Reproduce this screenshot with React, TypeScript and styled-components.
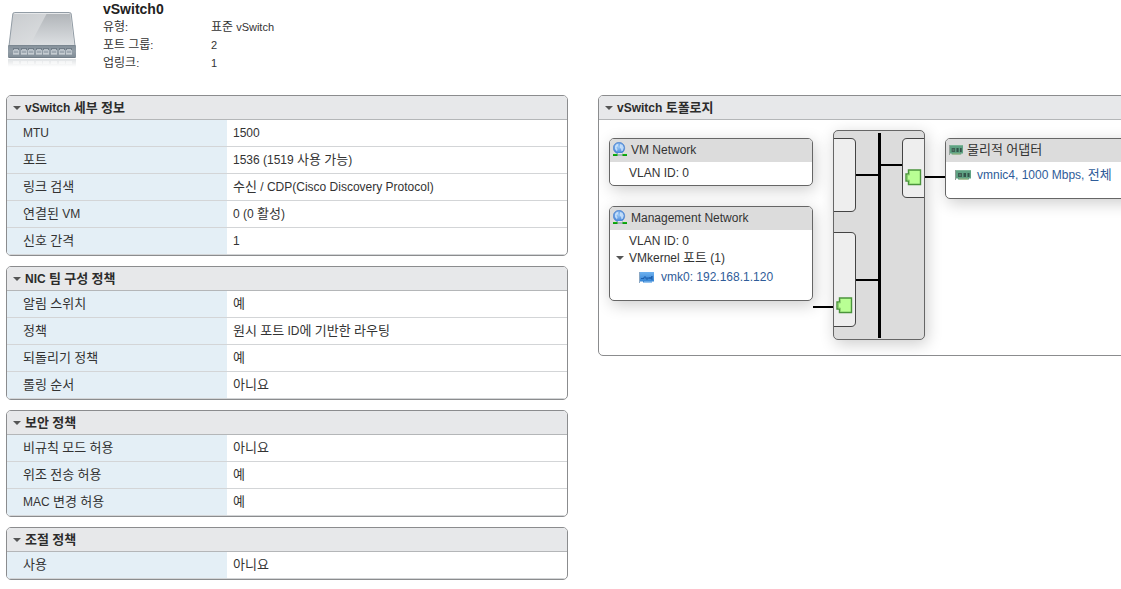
import React, { useState } from "react";
import styled, { createGlobalStyle } from "styled-components";

const GlobalStyle = createGlobalStyle`
  *, *::before, *::after { box-sizing: border-box; }
  body {
    margin: 0;
    background: #fff;
    color: #333;
    font-family: "Liberation Sans", Arial, "Noto Sans CJK KR", sans-serif;
    font-size: 12px;
    line-height: 18px;
  }
`;

const Page = styled.main`
  padding: 0 0 8px 6px;
  overflow: hidden;
`;

const Summary = styled.header`
  display: flex;
  gap: 25px;
  min-height: 95px;
`;

const DeviceIcon = styled.svg`
  flex: none;
  width: 72px;
  height: 60px;
  margin-top: 10px;
`;

const SwitchName = styled.h1`
  margin: 0;
  font-size: 14px;
  line-height: 18px;
  color: #222;
`;

const Facts = styled.dl`
  display: grid;
  grid-template-columns: 108px auto;
  margin: 0;
  font-size: 11px;
  line-height: 18px;
`;

const Term = styled.dt``;
const Fact = styled.dd`
  margin: 0;
`;

const Hangul = styled.span`
  font-size: calc(1em + 1px);
  line-height: 1;
`;

const Columns = styled.div`
  display: grid;
  grid-template-columns: 1fr 1fr;
  align-items: start;
  gap: 30px;
  margin-right: -39px;
`;

const PanelStack = styled.div`
  display: flex;
  flex-direction: column;
  gap: 10px;
`;

const PanelFrame = styled.section`
  border: 1px solid #8b8c8e;
  border-radius: 5px;
  overflow: hidden;
  background: #fff;
`;

const PanelHeading = styled.h2`
  margin: 0;
  font-size: 12px;
`;

const PanelToggle = styled.button`
  display: flex;
  align-items: center;
  gap: 4px;
  width: 100%;
  height: 24px;
  padding: 0 6px;
  border: 0;
  border-bottom: 1px solid #b4b6b8;
  background: #e7e8ea;
  color: #2c2c2c;
  font: inherit;
  font-weight: bold;
  text-align: left;
`;

const DetailTable = styled.table`
  width: 100%;
  border-collapse: separate;
  border-spacing: 0;
  table-layout: fixed;
`;

const Label = styled.th`
  width: 220px;
  height: 27px;
  padding: 0 6px 0 16px;
  border-bottom: 1px solid #d3d5d7;
  background: #e4eff6;
  font-weight: normal;
  text-align: left;
`;

const Value = styled.td`
  height: 27px;
  padding: 0 6px;
  border-bottom: 1px solid #d3d5d7;
`;

const Canvas = styled.div`
  position: relative;
  min-height: 235px;
`;

const Node = styled.article<{ $x: number; $y: number; $h: number }>`
  position: absolute;
  left: ${(p) => p.$x}px;
  top: ${(p) => p.$y}px;
  width: 204px;
  min-height: ${(p) => p.$h}px;
  border: 1px solid #666;
  border-radius: 5px;
  background: #fff;
  box-shadow: 2px 4px 16px rgba(0, 0, 0, 0.2);
`;

const NodeTitle = styled.h3`
  display: flex;
  align-items: center;
  gap: 4px;
  height: 23px;
  margin: 0;
  padding: 0 0 2px 3px;
  border-radius: 4px 4px 0 0;
  background: #dcdcdc;
  font-size: 12px;
  font-weight: normal;
`;

const NodeText = styled.p`
  margin: 0;
  padding: 2px 0 0 19px;
`;

const GroupToggle = styled.button`
  display: flex;
  align-items: center;
  gap: 5px;
  height: 16px;
  padding: 0 0 0 6px;
  border: 0;
  background: none;
  color: inherit;
  font: inherit;
`;

const DeviceRow = styled.a<{ $indent: number }>`
  display: flex;
  align-items: center;
  gap: 6px;
  height: 22px;
  padding-left: ${(p) => p.$indent}px;
  color: #2f5c99;
  text-decoration: none;
  white-space: nowrap;
`;

const DeviceRows = styled.div`
  padding-top: 2px;
`;

const SwitchBody = styled.div`
  position: absolute;
  left: 234px;
  top: 10px;
  width: 92px;
  height: 210px;
  border: 1px solid #666;
  border-radius: 5px;
  background: #dcdcdc;
  box-shadow: 2px 4px 16px rgba(0, 0, 0, 0.2);
`;

const Wiring = styled.svg`
  position: absolute;
  left: 214px;
  top: 10px;
`;

const Glyph = styled.svg`
  flex: none;
`;

/* Hangul is set one pixel larger than the Latin text beside it. */
function Mixed({ text }: { text: string }) {
  return (
    <span>
      {text.split(/([가-힣]+)/).map((run, i) =>
        i % 2 ? <Hangul key={i}>{run}</Hangul> : run
      )}
    </span>
  );
}

function Caret() {
  return (
    <Glyph width="8" height="4" viewBox="0 0 8 4" aria-hidden="true">
      <path d="M0 0H8L4 4Z" fill="#555" />
    </Glyph>
  );
}

function SwitchDevice() {
  const ports = [13, 21, 28, 36, 43, 51, 59, 66];
  return (
    <DeviceIcon viewBox="6 10 72 60" aria-hidden="true">
      <defs>
        <linearGradient id="lid" x1="0" y1="0" x2="1" y2="1">
          <stop offset="0" stopColor="#c8cbce" />
          <stop offset="1" stopColor="#e4e6e8" />
        </linearGradient>
        <linearGradient id="shade" x1="0" y1="0" x2="0" y2="1">
          <stop offset="0" stopColor="#b0b4b8" />
          <stop offset="1" stopColor="#dcdfe2" />
        </linearGradient>
        <linearGradient id="front" x1="0" y1="0" x2="0" y2="1">
          <stop offset="0" stopColor="#84909a" />
          <stop offset="0.5" stopColor="#929da6" />
          <stop offset="1" stopColor="#7f8b95" />
        </linearGradient>
        <linearGradient id="mirror" x1="0" y1="0" x2="0" y2="1">
          <stop offset="0" stopColor="#dfe2e4" />
          <stop offset="1" stopColor="#fff" />
        </linearGradient>
      </defs>
      <path d="M14.5 12.500H69.5Q71 12.500 71.2 14L75 46H9L12.8 14Q13 12.500 14.5 12.500Z" fill="url(#lid)" stroke="#929ca5" />
      <path d="M47 13H70L74 45H30Z" fill="url(#shade)" />
      <path d="M14.500 13.500H69.500" stroke="#e6e8ea" />
      <rect x="8" y="45" width="68" height="13" rx="1" fill="url(#front)" />
      <path d="M9 45.500H75" stroke="#7b8791" />
      <path d="M9 57.500H75" stroke="#737f89" />
      <rect x="8" y="59" width="68" height="8" fill="url(#mirror)" />
      {ports.map((x) => (
        <g key={x} transform={`translate(${x} 48)`}>
          <path d="M0 0H6V6H0Z" fill="#717d88" />
          <path d="M0 2H1V1H5V2H6V6H0Z" fill="#b9c1c8" />
          <path d="M1 3H5V5H1Z" fill="#a0aab3" />
          <path d="M0 6H6" stroke="#d3d9dd" />
          <path d="M0 13H6V16H0Z" fill="#fff" opacity="0.5" />
        </g>
      ))}
    </DeviceIcon>
  );
}

function NetworkIcon() {
  return (
    <Glyph width="14" height="15" viewBox="0 0 14 15" aria-hidden="true">
      <defs>
        <radialGradient id="globe" cx="0.45" cy="0.4" r="0.6">
          <stop offset="0" stopColor="#9ccaf6" />
          <stop offset="1" stopColor="#3f7fd6" />
        </radialGradient>
      </defs>
      <circle cx="6" cy="6" r="5.700" fill="url(#globe)" stroke="#4a7fcb" strokeWidth="0.600" />
      <path d="M2 4Q3.500 1.500 5.500 1.800L5 4L3.500 5.500L4.500 7.500L4 9.500L2 7Z" fill="#d5e9fc" opacity="0.8" />
      <path d="M7 2L9.500 2.800L10.800 5.500L10 8.500L8.500 9.500L8 7L6.800 5.500Z" fill="#d5e9fc" opacity="0.8" />
      <path d="M0 12H14V14H0Z" fill="#12b312" />
      <path d="M0 13.500H14" stroke="#0c9a0c" />
      <path d="M4.500 11H9.500V14H4.500Z" fill="#a9b8bd" />
      <path d="M5 11.500H9" stroke="#e2e8ea" />
    </Glyph>
  );
}

function VmkIcon() {
  return (
    <Glyph width="16" height="11" viewBox="0 0 16 11" aria-hidden="true">
      <defs>
        <linearGradient id="vmk" x1="0" y1="0" x2="0" y2="1">
          <stop offset="0" stopColor="#6fb2f0" />
          <stop offset="1" stopColor="#2f7fd0" />
        </linearGradient>
      </defs>
      <path d="M1 0H15V9.500H13V10.500H4V9.500H1Z" fill="url(#vmk)" />
      <path d="M0.500 0V11" stroke="#8aa7c4" />
      <path d="M2 6.500H5V5H7V7H9V5M10 7L11 5L12 7L13 4V8" fill="none" stroke="#1d5fae" />
      <path d="M5 10H13" stroke="#9ccbf5" />
    </Glyph>
  );
}

function NicIcon({ width }: { width: number }) {
  return (
    <Glyph width={width} height="10" viewBox="0 0 16 10" preserveAspectRatio="none" aria-hidden="true">
      <path d="M1 0H16V8.500H14V9.500H3V8.500H1Z" fill="#5fa283" />
      <path d="M0.500 0V10" stroke="#8d9c94" />
      <path d="M1 0.500H16" stroke="#7cb598" />
      <path d="M3 3H7V7H3Z" fill="#3d5f52" />
      <path d="M8.500 3H11V7H8.500ZM12.500 3H14.500V7H12.500Z" fill="#33544a" />
      <path d="M4 5H6" stroke="#6f8d82" />
      <path d="M4 9H13" stroke="#a3b77f" />
    </Glyph>
  );
}

function Jack({ x, y }: { x: number; y: number }) {
  return (
    <g transform={`translate(${x} ${y})`}>
      <path d="M3.500 1H15.500V15.500H3.500V12H1V5H3.500Z" fill="#b9ff94" stroke="#4b943c" strokeWidth="1.400" />
      <path d="M4.500 14V11H2.500V6H4.500V2.500" fill="none" stroke="#8fd172" />
    </g>
  );
}

function Panel({ title, children }: { title: string; children: React.ReactNode }) {
  const [open, setOpen] = useState(true);
  return (
    <PanelFrame>
      <PanelHeading>
        <PanelToggle type="button" aria-expanded={open} onClick={() => setOpen(!open)}>
          <Caret />
          <Mixed text={title} />
        </PanelToggle>
      </PanelHeading>
      {open && children}
    </PanelFrame>
  );
}

const sections = [
  {
    title: "vSwitch 세부 정보",
    rows: [
      ["MTU", "1500"],
      ["포트", "1536 (1519 사용 가능)"],
      ["링크 검색", "수신 / CDP(Cisco Discovery Protocol)"],
      ["연결된 VM", "0 (0 활성)"],
      ["신호 간격", "1"],
    ],
  },
  {
    title: "NIC 팀 구성 정책",
    rows: [
      ["알림 스위치", "예"],
      ["정책", "원시 포트 ID에 기반한 라우팅"],
      ["되돌리기 정책", "예"],
      ["롤링 순서", "아니요"],
    ],
  },
  {
    title: "보안 정책",
    rows: [
      ["비규칙 모드 허용", "아니요"],
      ["위조 전송 허용", "예"],
      ["MAC 변경 허용", "예"],
    ],
  },
  { title: "조절 정책", rows: [["사용", "아니요"]] },
];

const facts = [
  ["유형:", "표준 vSwitch"],
  ["포트 그룹:", "2"],
  ["업링크:", "1"],
];

function Topology() {
  const [open, setOpen] = useState(true);
  return (
    <Canvas>
      <Node $x={10} $y={18} $h={48}>
        <NodeTitle><NetworkIcon />VM Network</NodeTitle>
        <NodeText>VLAN ID: 0</NodeText>
      </Node>
      <Node $x={10} $y={86} $h={95}>
        <NodeTitle><NetworkIcon />Management Network</NodeTitle>
        <NodeText>VLAN ID: 0</NodeText>
        <GroupToggle type="button" aria-expanded={open} onClick={() => setOpen(!open)}>
          <Caret />
          <Mixed text="VMkernel 포트 (1)" />
        </GroupToggle>
        {open && (
          <DeviceRow href="#vmk0" $indent={29}><VmkIcon />vmk0: 192.168.1.120</DeviceRow>
        )}
      </Node>
      <SwitchBody />
      <Node $x={346} $y={18} $h={61}>
        <NodeTitle><NicIcon width={14} /><Mixed text="물리적 어댑터" /></NodeTitle>
        <DeviceRows>
          <DeviceRow href="#vmnic4" $indent={9}>
            <NicIcon width={16} />
            <Mixed text="vmnic4, 1000 Mbps, 전체" />
          </DeviceRow>
        </DeviceRows>
      </Node>
      <Wiring width="132" height="210" viewBox="0 0 132 210" aria-hidden="true">
        <g fill="#eee" stroke="#444">
          <path d="M21 8.500H38Q42.500 8.500 42.500 13V77Q42.500 81.500 38 81.500H21" />
          <path d="M21 102.500H38Q42.500 102.500 42.500 107V192Q42.500 196.500 38 196.500H21" />
          <path d="M111 8.500H94Q89.500 8.500 89.500 13V63Q89.500 67.500 94 67.500H111" />
        </g>
        <path d="M66.500 3V208" stroke="#000" strokeWidth="3" />
        <path d="M43 45H66M67 35H89M43 150H66M0 177H20M112 47H132" stroke="#000" strokeWidth="2" />
        <Jack x={92} y={39} />
        <Jack x={23} y={167} />
      </Wiring>
    </Canvas>
  );
}

export default function App() {
  return (
    <>
      <GlobalStyle />
      <Page>
        <Summary>
          <SwitchDevice />
          <div>
            <SwitchName>vSwitch0</SwitchName>
            <Facts>
              {facts.map(([term, fact]) => (
                <React.Fragment key={term}>
                  <Term><Mixed text={term} /></Term>
                  <Fact><Mixed text={fact} /></Fact>
                </React.Fragment>
              ))}
            </Facts>
          </div>
        </Summary>
        <Columns>
          <PanelStack>
            {sections.map((s) => (
              <Panel key={s.title} title={s.title}>
                <DetailTable>
                  <tbody>
                    {s.rows.map(([label, value]) => (
                      <tr key={label}>
                        <Label scope="row"><Mixed text={label} /></Label>
                        <Value><Mixed text={value} /></Value>
                      </tr>
                    ))}
                  </tbody>
                </DetailTable>
              </Panel>
            ))}
          </PanelStack>
          <Panel title="vSwitch 토폴로지">
            <Topology />
          </Panel>
        </Columns>
      </Page>
    </>
  );
}
